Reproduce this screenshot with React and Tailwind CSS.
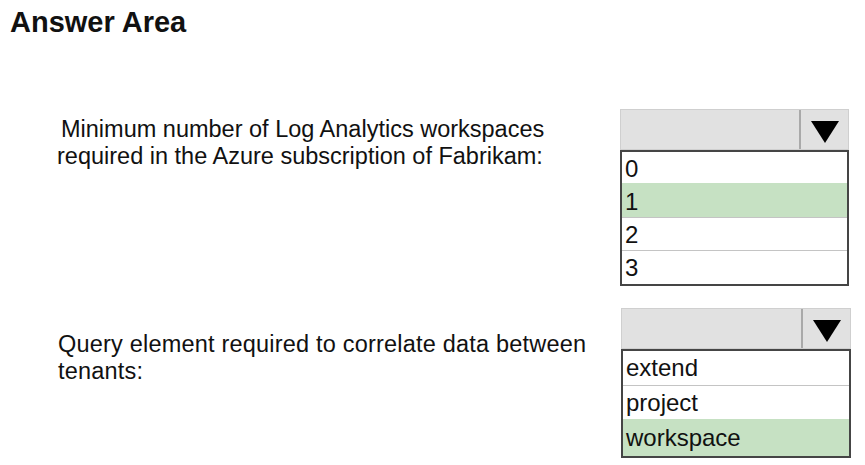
import React from 'react';

const Caret = () => (
  <svg width="28" height="22" viewBox="0 0 28 22" className="block mt-[4px]">
    <polygon points="0,0 28,0 14,22" fill="#000" />
  </svg>
);

const Dropdown = ({ options, selected, width, rowHeight }) => (
  <div className={width}>
    {/* closed select box */}
    <div className="flex h-[41px] border border-[#cfcfcf] bg-[#e1e1e1]">
      <div className="flex-1" />
      <div className="w-[49px] border-l-2 border-[#a9a9a9] flex items-center justify-center">
        <Caret />
      </div>
    </div>
    {/* option list */}
    <div className="border-2 border-[#454545] bg-white">
      {options.map((opt, i) => (
        <div
          key={opt}
          className={`${rowHeight} pl-[3px] text-[24px] leading-[38px] text-[#111] ${
            i < options.length - 1 ? 'border-b border-[#c4c4c4]' : ''
          } ${opt === selected ? 'bg-[#c6e1c3]' : ''}`}
        >
          <div className="-mt-[2px]">{opt}</div>
        </div>
      ))}
    </div>
  </div>
);

const App = () => {
  return (
    <div className="w-[865px] h-[465px] bg-white overflow-hidden font-['Liberation_Sans',Arial,sans-serif] text-[#111]">
      {/* Header */}
      <h1 className="pl-[10px] pt-[5px] text-[29px] leading-[34px] font-bold">Answer Area</h1>

      {/* Question 1 */}
      <div className="flex mt-[70px]">
        <div className="w-[620px] shrink-0 pl-[57px] pt-[7px] text-[23.5px] leading-[27px]">
          <div className="pl-[4px]">Minimum number of Log Analytics workspaces</div>
          <div>required in the Azure subscription of Fabrikam:</div>
        </div>
        <Dropdown
          options={['0', '1', '2', '3']}
          selected="1"
          width="w-[229px]"
          rowHeight="h-[35px]"
        />
      </div>

      {/* Question 2 */}
      <div className="flex mt-[22px]">
        <div className="w-[621px] shrink-0 pl-[58px] pt-[23px] text-[23.5px] leading-[27px] tracking-[0.2px]">
          <div>Query element required to correlate data between</div>
          <div>tenants:</div>
        </div>
        <Dropdown
          options={['extend', 'project', 'workspace']}
          selected="workspace"
          width="w-[230px]"
          rowHeight="h-[37px]"
        />
      </div>
    </div>
  );
};

export default App;
